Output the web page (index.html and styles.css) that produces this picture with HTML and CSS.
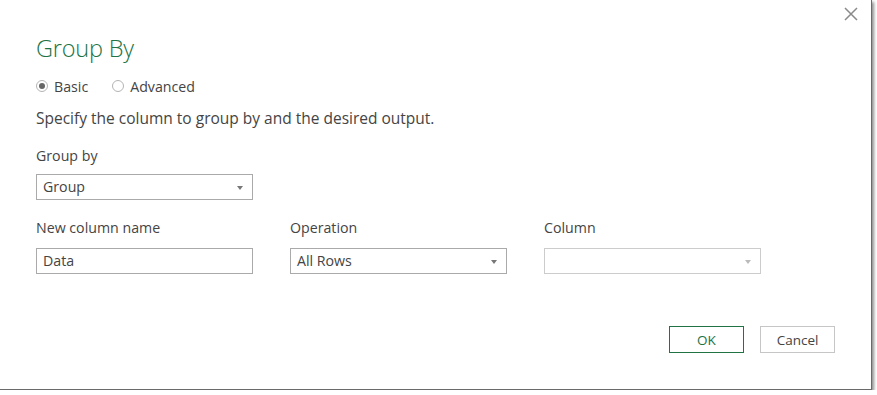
FILE: index.html
```html
<!DOCTYPE html>
<html>
<head>
<meta charset="utf-8">
<link rel="stylesheet" href="styles.css">
</head>
<body>
<div class="dialog">
  <button class="close" aria-label="Close">
    <svg width="14" height="14" viewBox="0 0 14 14"><path d="M1 1L13 13M13 1L1 13" stroke="#8a8a8a" stroke-width="1.5" fill="none"/></svg>
  </button>
  <h1 class="title">Group By</h1>
  <div class="radios">
    <label class="radio"><span class="dot checked"></span>Basic</label>
    <label class="radio"><span class="dot"></span>Advanced</label>
  </div>
  <p class="desc">Specify the column to group by and the desired output.</p>
  <div class="field">
    <div class="label">Group by</div>
    <div class="select">Group<span class="arrow"></span></div>
  </div>
  <div class="row">
    <div class="field col">
      <div class="label">New column name</div>
      <div class="input">Data</div>
    </div>
    <div class="field col">
      <div class="label">Operation</div>
      <div class="select">All Rows<span class="arrow"></span></div>
    </div>
    <div class="field col">
      <div class="label">Column</div>
      <div class="select disabled"><span class="arrow light"></span></div>
    </div>
  </div>
  <div class="buttons">
    <button class="btn primary">OK</button>
    <button class="btn">Cancel</button>
  </div>
</div>
</body>
</html>
```
FILE: styles.css
```css
html, body { margin: 0; padding: 0; background: #fff; }
body { font-family: "Open Sans", "Noto Sans", sans-serif; color: #444; }
.dialog {
  position: relative;
  width: 872px;
  height: 390px;
  box-sizing: border-box;
  background: #fff;
  padding: 0 0 0 36px;
  border-right: 1px solid #6a6a6a;
  border-bottom: 1px solid #6a6a6a;
  box-shadow: 2px 2px 3px rgba(0,0,0,0.45);
}
.close {
  position: absolute;
  right: 12px;
  top: 6px;
  width: 16px;
  height: 16px;
  padding: 0;
  border: 0;
  background: none;
  display: flex;
  align-items: center;
  justify-content: center;
}
.title {
  margin: 0;
  padding-top: 33px;
  font-weight: 300;
  font-size: 23.5px;
  line-height: 30px;
  color: #217346;
  letter-spacing: -0.2px;
}
.radios {
  display: flex;
  gap: 24px;
  margin-top: 12px;
  height: 22px;
  align-items: center;
}
.radio {
  display: flex;
  align-items: center;
  font-size: 14.2px;
  color: #444;
}
.dot {
  width: 12px;
  height: 12px;
  border: 1px solid #b4b4b4;
  border-radius: 50%;
  margin-right: 6px;
  box-sizing: border-box;
  display: flex;
  align-items: center;
  justify-content: center;
  background: #fff;
}
.dot.checked::after {
  content: "";
  width: 6px;
  height: 6px;
  border-radius: 50%;
  background: #666;
}
.desc {
  margin: 11px 0 0;
  font-size: 15.5px;
  line-height: 20px;
  color: #444;
}
.field { display: flex; flex-direction: column; }
.field > .label {
  font-size: 14.2px;
  line-height: 20px;
  color: #444;
  margin-top: 18px;
  margin-bottom: 8px;
}
.row { display: flex; gap: 37px; margin-top: 18px; }
.row .field > .label { margin-top: 0; margin-bottom: 10px; }
.select, .input {
  position: relative;
  width: 217px;
  height: 26px;
  box-sizing: border-box;
  border: 1px solid #aaa;
  font-size: 14.2px;
  line-height: 24px;
  padding-left: 6px;
  color: #444;
  background: #fff;
}
.select.disabled { border-color: #ccc; }
.arrow {
  position: absolute;
  right: 9px;
  top: 11px;
  width: 0;
  height: 0;
  border-left: 3.5px solid transparent;
  border-right: 3.5px solid transparent;
  border-top: 4px solid #777;
}
.arrow.light { border-top-color: #bbb; }
.buttons {
  display: flex;
  justify-content: flex-end;
  gap: 16px;
  margin-top: 52px;
  padding-right: 36px;
}
.btn {
  width: 75px;
  height: 27px;
  box-sizing: border-box;
  border: 1px solid #c6c6c6;
  background: #fff;
  font-family: "Open Sans", "Noto Sans", sans-serif;
  font-size: 13.5px;
  color: #444;
  padding: 0;
}
.btn.primary { border-color: #217346; color: #217346; }
```
